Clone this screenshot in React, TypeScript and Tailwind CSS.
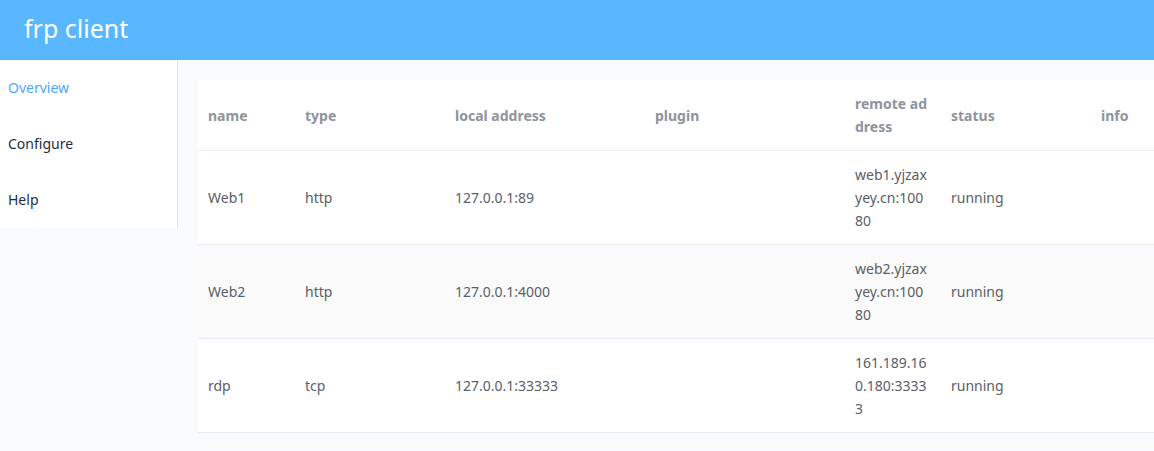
import React from "react";

const cols = [
  { key: "name", label: ["name"], w: "w-[97px]" },
  { key: "type", label: ["type"], w: "w-[150px]" },
  { key: "local", label: ["local address"], w: "w-[200px]" },
  { key: "plugin", label: ["plugin"], w: "w-[200px]" },
  { key: "remote", label: ["remote ad", "dress"], w: "w-[96px]" },
  { key: "status", label: ["status"], w: "w-[150px]" },
  { key: "info", label: ["info"], w: "w-[150px]" },
];

const rows = [
  { name: "Web1", type: "http", local: "127.0.0.1:89", plugin: "", remote: ["web1.yjzax", "yey.cn:100", "80"], status: "running", info: "" },
  { name: "Web2", type: "http", local: "127.0.0.1:4000", plugin: "", remote: ["web2.yjzax", "yey.cn:100", "80"], status: "running", info: "" },
  { name: "rdp", type: "tcp", local: "127.0.0.1:33333", plugin: "", remote: ["161.189.16", "0.180:3333", "3"], status: "running", info: "" },
];

export default function App() {
  return (
    <div className="w-[1154px] h-[451px] overflow-hidden bg-[#f9fafc] font-['Noto_Sans','Open_Sans',sans-serif]">
      <header className="h-[60px] bg-[#58b7ff] flex items-center pl-[24px]">
        <h1 className="text-white text-[25px] leading-none font-normal -mt-[3px]">frp client</h1>
      </header>
      <div className="flex">
        <nav className="w-[178px] shrink-0 self-start bg-white border-r border-[#e4e4e4] text-[14px]">
          <div className="h-[56px] flex items-center pl-[8px] pb-[2px] text-[#4ea6ff]">Overview</div>
          <div className="h-[56px] flex items-center pl-[8px] pb-[2px] text-[#1f2d3d]">Configure</div>
          <div className="h-[56px] flex items-center pl-[8px] pb-[2px] text-[#1f2d3d]">Help</div>
        </nav>
        <main className="flex-1 pt-[20px] pl-[20px] min-w-0">
          <div className="bg-white w-[1043px] text-[14px]">
            <div className="flex h-[71px] border-b border-[#e6ebf5]">
              {cols.map((c) => (
                <div key={c.key} className={`${c.w} shrink-0 px-[10px] flex flex-col justify-center font-bold text-[#8e939c] leading-[23px]`}>
                  {c.label.map((l) => (
                    <span key={l}>{l}</span>
                  ))}
                </div>
              ))}
            </div>
            {rows.map((r, i) => (
              <div key={r.name} className={`flex h-[94px] border-b border-[#e6ebf5] ${i === 1 ? "bg-[#fafafa]" : "bg-white"} text-[#5a5e66] leading-[23px]`}>
                <div className="w-[97px] shrink-0 px-[10px] flex items-center">{r.name}</div>
                <div className="w-[150px] shrink-0 px-[10px] flex items-center">{r.type}</div>
                <div className="w-[200px] shrink-0 px-[10px] flex items-center">{r.local}</div>
                <div className="w-[200px] shrink-0 px-[10px] flex items-center">{r.plugin}</div>
                <div className="w-[96px] shrink-0 px-[10px] flex flex-col justify-center">
                  {r.remote.map((l) => (
                    <span key={l}>{l}</span>
                  ))}
                </div>
                <div className="w-[150px] shrink-0 px-[10px] flex items-center">{r.status}</div>
                <div className="w-[150px] shrink-0 px-[10px] flex items-center">{r.info}</div>
              </div>
            ))}
          </div>
        </main>
      </div>
    </div>
  );
}
